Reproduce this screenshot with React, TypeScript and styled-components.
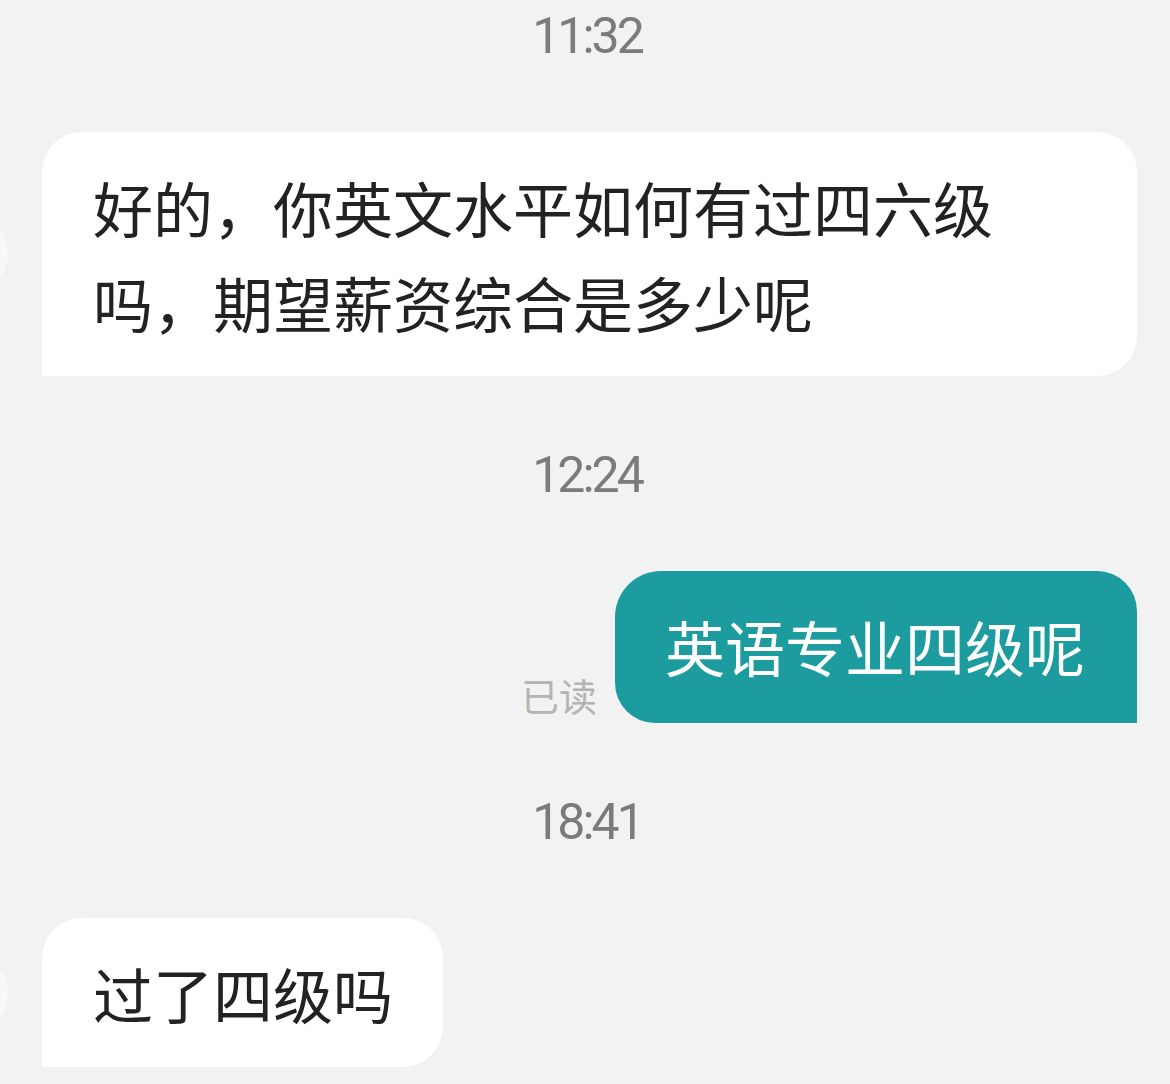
import React from 'react'
import styled, { createGlobalStyle } from 'styled-components'

const GlobalStyle = createGlobalStyle`
  html, body {
    margin: 0;
    padding: 0;
    background: #f2f2f2;
  }
  body {
    font-family: 'Noto Sans CJK SC', 'Noto Sans', sans-serif;
  }
`

const Screen = styled.div`
  width: 1170px;
  height: 1084px;
  overflow: hidden;
  background: #f2f2f2;
  padding-top: 6px;
  box-sizing: border-box;
  display: flex;
  flex-direction: column;
`

const Time = styled.div`
  height: 60px;
  line-height: 60px;
  text-align: center;
  font-family: Roboto, 'Liberation Sans', sans-serif;
  font-size: 50px;
  letter-spacing: -3px;
  color: #7b7b7b;
  margin: 0 0 66px 4px;
`

const Row = styled.div<{ $mine?: boolean }>`
  display: flex;
  align-items: flex-end;
  justify-content: ${p => (p.$mine ? 'flex-end' : 'flex-start')};
  padding-right: ${p => (p.$mine ? '33px' : '0')};
  margin-bottom: 69px;
`

// avatar sits mostly outside the visible screen, only a sliver shows
const Avatar = styled.div`
  flex: none;
  width: 80px;
  height: 80px;
  border-radius: 50%;
  background: #f8f8f8;
  align-self: center;
  margin: 0 34px 0 -72px;
`

const Bubble = styled.div<{ $mine?: boolean; $width?: number }>`
  box-sizing: border-box;
  padding: ${p => (p.$mine ? '27px 52px 30px 50px' : '27px 50px 27px 51px')};
  ${p => (p.$width ? `width: ${p.$width}px;` : '')}
  background: ${p => (p.$mine ? '#1d9ca0' : '#ffffff')};
  color: ${p => (p.$mine ? '#ffffff' : '#222222')};
  border-radius: ${p => (p.$mine ? '46px 40px 0 40px' : '40px 40px 40px 0')};
  font-size: 60px;
  line-height: 95px;
`

const BubbleText = styled.div<{ $cols?: number }>`
  ${p => (p.$cols ? `max-width: ${p.$cols}em;` : '')}
`

const ReadMark = styled.div`
  font-size: 38px;
  line-height: 40px;
  color: #b4b4b4;
  margin: 0 18px 8px 0;
`

export default function App() {
  return (
    <>
      <GlobalStyle />
      <Screen>
        <Time>11:32</Time>
        <Row>
          <Avatar />
          <Bubble $width={1095}>
            <BubbleText $cols={15}>
              好的，你英文水平如何有过四六级吗，期望薪资综合是多少呢
            </BubbleText>
          </Bubble>
        </Row>

        <Time>12:24</Time>
        <Row $mine>
          <ReadMark>已读</ReadMark>
          <Bubble $mine>
            <BubbleText>英语专业四级呢</BubbleText>
          </Bubble>
        </Row>

        <Time>18:41</Time>
        <Row>
          <Avatar />
          <Bubble>
            <BubbleText>过了四级吗</BubbleText>
          </Bubble>
        </Row>
      </Screen>
    </>
  )
}
